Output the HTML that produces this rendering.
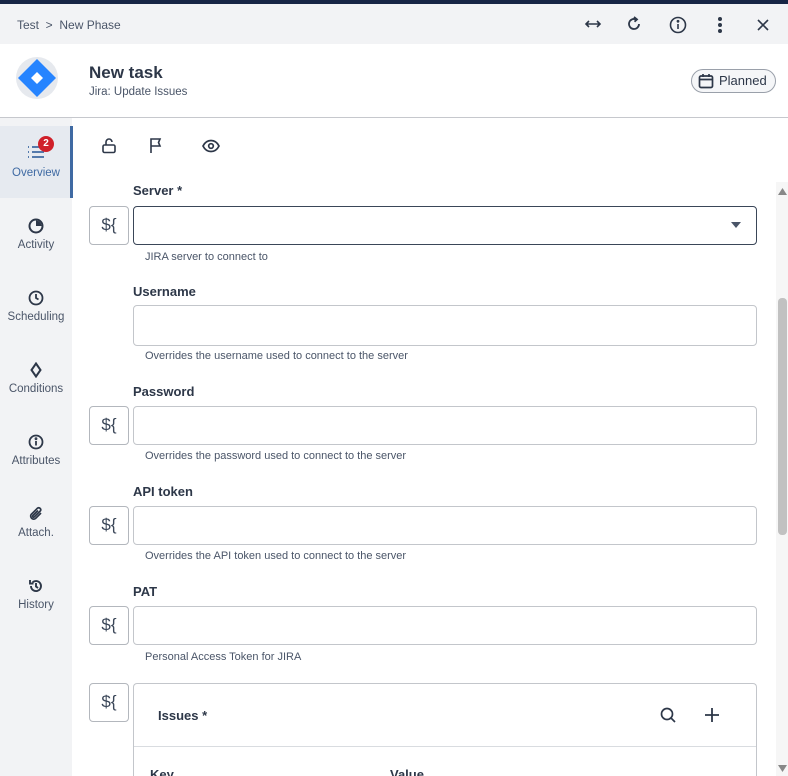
<!DOCTYPE html>
<html style="width:788px;height:776px;overflow:hidden"><head><style>
*{box-sizing:border-box;margin:0;padding:0}
body{width:788px;height:776px;overflow:hidden;font-family:"Liberation Sans",sans-serif;background:#fff;position:relative;color:#2d3748}
.a{position:absolute}
.top{left:0;top:0;width:788px;height:4px;background:#172545}
.bc{left:0;top:4px;width:788px;height:40px;background:#f2f3f5}
.hdr{left:0;top:44px;width:788px;height:74px;background:#fff;border-bottom:1px solid #c6c8cd}
.side{left:0;top:118px;width:72px;height:658px;background:#f2f3f5}
.item{position:absolute;left:0;width:72px;text-align:center;font-size:11.5px;color:#4a5568}
.item svg{display:block;margin:0 auto 5px}
.lbl{position:absolute;left:133px;font-size:13px;font-weight:bold;color:#2d3748}
.inp{position:absolute;left:133px;width:624px;height:39px;border:1px solid #c3c6cb;border-radius:4px;background:#fff}
.hint{position:absolute;left:145px;font-size:11px;color:#4a5568}
.btn{position:absolute;left:89px;width:40px;height:39px;border:1px solid #b3b7bd;border-radius:4px;font-size:17px;color:#3a4658;text-align:center;line-height:36px}
</style></head><body>
<div class="a top"></div>
<div class="a bc"></div>
<div class="a" style="left:17px;top:18px;font-size:12px;color:#4a5568">Test &nbsp;&gt;&nbsp; New Phase</div>
<svg class="a" style="left:584px;top:17px" width="18" height="14" viewBox="0 0 18 14" fill="none" stroke="#2d3748" stroke-width="1.6"><path d="M2 7h14M5 4L2 7l3 3M13 4l3 3-3 3"/></svg>
<svg class="a" style="left:626px;top:16px" width="16" height="16" viewBox="0 0 16 16" fill="none" stroke="#2d3748" stroke-width="1.8"><path d="M13 8a5 5 0 1 1-3-4.6"/><path d="M8 1l3 2.4-2.5 2.3" /></svg>
<svg class="a" style="left:669px;top:16px" width="18" height="18" viewBox="0 0 18 18" fill="none" stroke="#2d3748" stroke-width="1.6"><circle cx="9" cy="9" r="7.5"/><path d="M9 8v5"/><circle cx="9" cy="5.3" r=".6" fill="#2d3748"/></svg>
<svg class="a" style="left:717px;top:16px" width="6" height="18"><circle cx="3" cy="3" r="2" fill="#2d3748"/><circle cx="3" cy="9" r="2" fill="#2d3748"/><circle cx="3" cy="15" r="2" fill="#2d3748"/></svg>
<svg class="a" style="left:757px;top:19px" width="12" height="12" viewBox="0 0 12 12" stroke="#2d3748" stroke-width="1.6"><path d="M1 1l10 10M11 1L1 11"/></svg>
<div class="a hdr"></div>
<div class="a" style="left:16px;top:57px;width:42px;height:42px;border-radius:50%;background:#e6e9ee"></div>
<svg class="a" style="left:17px;top:58px" width="40" height="40" viewBox="0 0 40 40"><path d="M20 1L39 20 20 39 1 20z" fill="#2684ff"/><path d="M20 14l6 6-6 6-6-6z" fill="#fff"/></svg>
<div class="a" style="left:89px;top:63px;font-size:17px;font-weight:bold;color:#2d3748">New task</div>
<div class="a" style="left:89px;top:86px;font-size:11.5px;color:#4a5568">Jira: Update Issues</div>
<div class="a" style="left:691px;top:69px;width:85px;height:24px;border:1px solid #9aa0aa;border-radius:12px;background:#f5f6f8;font-size:13px;color:#2d3748;line-height:22px;padding-left:27px">Planned</div>
<svg class="a" style="left:698px;top:73px" width="16" height="16" viewBox="0 0 16 16" fill="none" stroke="#2d3748" stroke-width="1.7"><rect x="1.5" y="3" width="13" height="11.5" rx="1.5"/><path d="M1.5 6.5h13M5 1v3M11 1v3"/></svg>
<div class="a side"></div>
<div class="a" style="left:0;top:126px;width:73px;height:72px;background:#e6eaf0;border-right:3px solid #3f6aa3"></div>
<div class="item" style="top:145px;color:#3f6aa3"><svg width="18" height="14" viewBox="0 0 18 14" fill="none" stroke="#3f6aa3" stroke-width="1.8" style="margin-bottom:8px"><path d="M5 2h12M5 7h12M5 12h12M1 2h1M1 7h1M1 12h1"/></svg>Overview</div>
<div class="a" style="left:38px;top:136px;width:16px;height:16px;border-radius:50%;background:#d0202a;color:#fff;font-size:10px;font-weight:bold;text-align:center;line-height:16px">2</div>
<div class="item" style="top:218px"><svg width="16" height="16" viewBox="0 0 16 16"><circle cx="8" cy="8" r="6.5" fill="none" stroke="#2d3748" stroke-width="2"/><path d="M8 8V2.5A5.5 5.5 0 0 1 13.5 8z" fill="#2d3748"/></svg>Activity</div>
<div class="item" style="top:290px"><svg width="16" height="16" viewBox="0 0 16 16" fill="none" stroke="#2d3748" stroke-width="1.8"><circle cx="8" cy="8" r="6.5"/><path d="M8 4v4l2.5 1.5"/></svg>Scheduling</div>
<div class="item" style="top:362px"><svg width="16" height="16" viewBox="0 0 16 16" fill="none" stroke="#2d3748" stroke-width="2"><path d="M8 1.5l4.5 6.5L8 14.5 3.5 8z"/></svg>Conditions</div>
<div class="item" style="top:434px"><svg width="16" height="16" viewBox="0 0 16 16" fill="none" stroke="#2d3748" stroke-width="1.8"><circle cx="8" cy="8" r="6.5"/><path d="M8 7v4.5"/><circle cx="8" cy="4.7" r=".5" fill="#2d3748"/></svg>Attributes</div>
<div class="item" style="top:506px"><svg width="16" height="16" viewBox="0 0 16 16" fill="none" stroke="#2d3748" stroke-width="1.7"><path d="M13 7l-5.5 5.5a3 3 0 0 1-4.2-4.2L9.5 2.2a2 2 0 0 1 2.8 2.8L6.2 11a1 1 0 0 1-1.4-1.4L10 4.5"/></svg>Attach.</div>
<div class="item" style="top:578px"><svg width="16" height="16" viewBox="0 0 16 16" fill="none" stroke="#2d3748" stroke-width="1.9"><path d="M3 8a5 5 0 1 0 1.5-3.5"/><path d="M2 2v3.5h3.5" /><path d="M8 5v3.5l2 1.5"/></svg>History</div>
<svg class="a" style="left:101px;top:137px" width="16" height="17" viewBox="0 0 16 17" fill="none" stroke="#2d3748" stroke-width="1.6"><rect x="2" y="8" width="12" height="7.5" rx="1.5"/><path d="M5 8V5a3 3 0 0 1 6 0"/></svg>
<svg class="a" style="left:149px;top:137px" width="14" height="17" viewBox="0 0 14 17" fill="none" stroke="#2d3748" stroke-width="1.6"><path d="M2 16V2h9l-1.5 3.5L11 9H2"/></svg>
<svg class="a" style="left:202px;top:139px" width="18" height="14" viewBox="0 0 18 14" fill="none" stroke="#2d3748" stroke-width="1.7"><path d="M1 7c2-4 5-5.5 8-5.5S15 3 17 7c-2 4-5 5.5-8 5.5S3 11 1 7z"/><circle cx="9" cy="7" r="2.3"/></svg>
<div class="lbl" style="top:183px">Server *</div>
<div class="btn" style="top:206px">${</div>
<div class="inp" style="top:206px;border-color:#3a4658;border-width:1px"></div>
<svg class="a" style="left:731px;top:222px" width="10" height="6"><path d="M0 0h10L5 6z" fill="#4a5568"/></svg>
<div class="hint" style="top:251px">JIRA server to connect to</div>
<div class="lbl" style="top:284px">Username</div>
<div class="inp" style="top:305px;height:41px"></div>
<div class="hint" style="top:350px">Overrides the username used to connect to the server</div>
<div class="lbl" style="top:384px">Password</div>
<div class="btn" style="top:406px">${</div>
<div class="inp" style="top:406px"></div>
<div class="hint" style="top:450px">Overrides the password used to connect to the server</div>
<div class="lbl" style="top:484px">API token</div>
<div class="btn" style="top:506px">${</div>
<div class="inp" style="top:506px"></div>
<div class="hint" style="top:550px">Overrides the API token used to connect to the server</div>
<div class="lbl" style="top:584px">PAT</div>
<div class="btn" style="top:606px">${</div>
<div class="inp" style="top:606px"></div>
<div class="hint" style="top:651px">Personal Access Token for JIRA</div>
<div class="btn" style="top:683px">${</div>
<div class="a" style="left:133px;top:683px;width:624px;height:93px;border:1px solid #c3c6cb;border-bottom:none;border-radius:4px 4px 0 0;overflow:hidden">
<div class="a" style="left:0;top:62px;width:622px;height:1px;background:#d9dce0"></div>
<div class="a" style="left:24px;top:24px;font-size:13px;font-weight:bold;color:#2d3748">Issues *</div>
<svg class="a" style="left:526px;top:23px" width="16" height="16" viewBox="0 0 16 16" fill="none" stroke="#2d3748" stroke-width="1.7"><circle cx="7" cy="7" r="5.5"/><path d="M11 11l4 4"/></svg>
<svg class="a" style="left:571px;top:24px" width="14" height="14" viewBox="0 0 14 14" stroke="#2d3748" stroke-width="1.8"><path d="M7 0v14M0 7h14"/></svg>
<div class="a" style="left:16px;top:83px;font-size:13px;font-weight:bold">Key</div>
<div class="a" style="left:256px;top:83px;font-size:13px;font-weight:bold">Value</div>
</div>
<div class="a" style="left:776px;top:182px;width:12px;height:594px;background:#f6f6f6"></div>
<svg class="a" style="left:778px;top:188px" width="9" height="7"><path d="M0 7h9L4.5 0z" fill="#888"/></svg>
<svg class="a" style="left:778px;top:765px" width="9" height="7"><path d="M0 0h9L4.5 7z" fill="#888"/></svg>
<div class="a" style="left:778px;top:298px;width:9px;height:237px;border-radius:4px;background:#c1c1c1"></div>
</body></html>
